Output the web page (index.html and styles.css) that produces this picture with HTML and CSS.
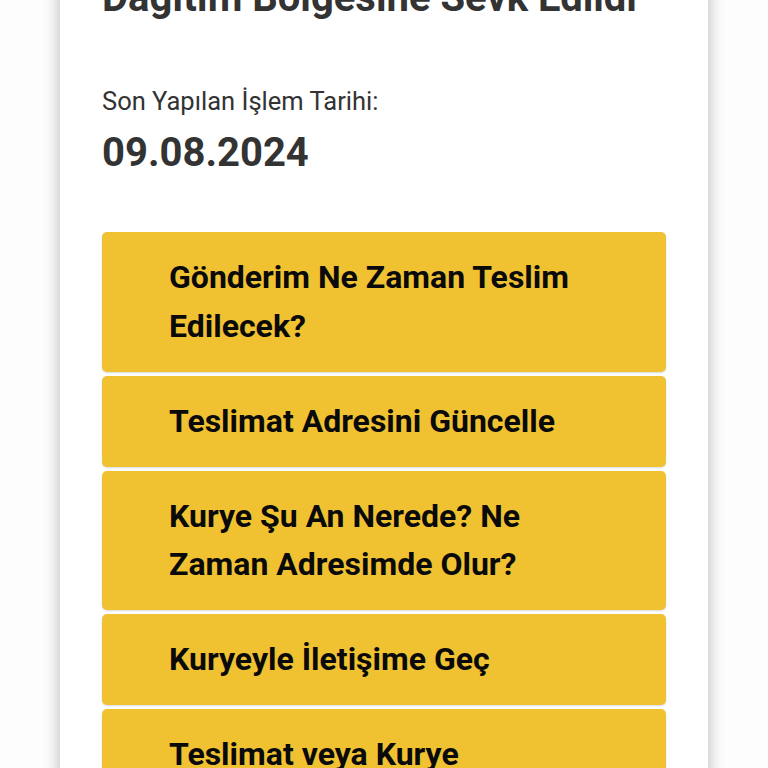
FILE: index.html
```html
<!DOCTYPE html>
<html lang="tr">
<head>
    <meta charset="UTF-8">
    <meta name="viewport" content="width=device-width, initial-scale=1.0">
    <title>Gönderi Takip</title>
    <link rel="stylesheet" href="styles.css">
</head>
<body>
    <div class="tracking-card">
        <h1 class="status-title">Dağıtım Bölgesine Sevk Edildi</h1>

        <div class="last-action">
            <div class="last-action-label">Son Yapılan İşlem Tarihi:</div>
            <div class="last-action-date">09.08.2024</div>
        </div>

        <div class="action-list">
            <button class="action-btn">Gönderim Ne Zaman Teslim Edilecek?</button>
            <button class="action-btn">Teslimat Adresini Güncelle</button>
            <button class="action-btn">Kurye Şu An Nerede? Ne Zaman Adresimde Olur?</button>
            <button class="action-btn">Kuryeyle İletişime Geç</button>
            <button class="action-btn">Teslimat veya Kurye Hakkında Şikayet</button>
        </div>
    </div>
</body>
</html>
```

FILE: styles.css
```css
html, body {
    margin: 0;
    padding: 0;
}

body {
    font-family: Roboto, "Noto Sans", Arial, sans-serif;
    background-color: #fdfdfd;
    overflow: hidden;
    height: 768px;
}

.tracking-card {
    width: 648px;
    margin: -26px auto 0;
    box-sizing: border-box;
    padding: 0 42px 40px;
    background-color: #ffffff;
    box-shadow: 0 0 16px rgba(0, 0, 0, 0.28);
    min-height: 900px;
}

.status-title {
    margin: 0;
    font-size: 40px;
    line-height: 48px;
    font-weight: 700;
    color: #333333;
}

.last-action {
    margin-top: 64px;
}

.last-action-label {
    font-size: 25.5px;
    line-height: 30px;
    color: #333333;
}

.last-action-date {
    margin-top: 15px;
    font-size: 40px;
    line-height: 44px;
    font-weight: 700;
    color: #333333;
}

.action-list {
    margin-top: 57px;
    display: flex;
    flex-direction: column;
    gap: 4px;
}

.action-btn {
    display: block;
    width: 100%;
    text-align: left;
    padding: 21.25px 67px;
    border: none;
    border-radius: 5px;
    background-color: #f0c232;
    box-shadow: 0 1px 2px rgba(0, 0, 0, 0.15);
    font-family: inherit;
    font-size: 32px;
    line-height: 48.5px;
    font-weight: 700;
    color: #0a0a0a;
    cursor: pointer;
}
```
